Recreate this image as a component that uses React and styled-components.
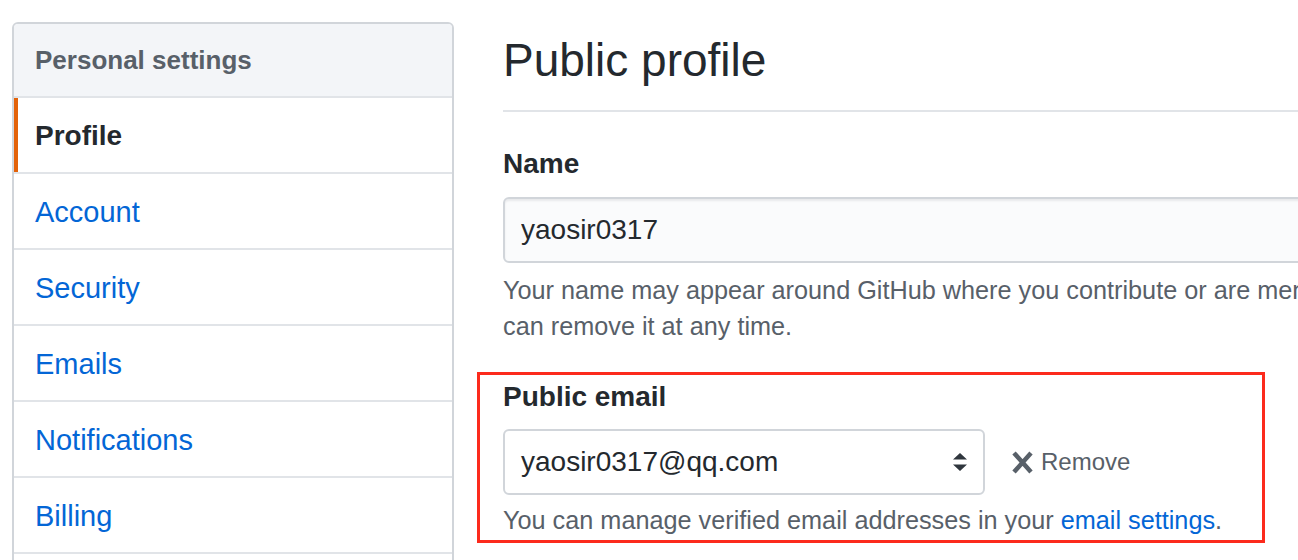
import React from 'react';
import styled, { createGlobalStyle } from 'styled-components';

const GlobalStyle = createGlobalStyle`
  html, body {
    margin: 0;
    padding: 0;
    background: #fff;
    overflow: hidden;
  }

  body {
    font-family: "Liberation Sans", Arial, sans-serif;
    color: #24292e;
  }
`;

const Page = styled.div`
  display: flex;
  align-items: flex-start;
  gap: 49px;
  width: max-content;
  padding: 22px 0 0 12px;
`;

const Sidebar = styled.nav`
  flex-shrink: 0;
  width: 442px;
  box-sizing: border-box;
  border: 2px solid #d1d5da;
  border-radius: 6px;
  overflow: hidden;
`;

const MenuHeading = styled.div`
  display: flex;
  align-items: center;
  height: 72px;
  padding: 0 21px;
  background: #f3f5f8;
  border-bottom: 2px solid #e1e4e8;
  font-size: 26px;
  font-weight: bold;
  color: #586069;
`;

const MenuItem = styled.a`
  display: flex;
  align-items: center;
  height: 76px;
  box-sizing: border-box;
  padding: 2px 0 0 21px;
  border-bottom: 2px solid #e1e4e8;
  font-size: ${({ $active }) => ($active ? 28 : 29)}px;
  text-decoration: none;
  color: ${({ $active }) => ($active ? '#24292e' : '#0366d6')};
  font-weight: ${({ $active }) => ($active ? 'bold' : 'normal')};
  box-shadow: ${({ $active }) => ($active ? 'inset 4px 0 0 #e36209' : 'none')};
`;

const Main = styled.main`
  flex-shrink: 0;
  width: 980px;
`;

const Subhead = styled.div`
  padding: 9px 0 21px;
  border-bottom: 2px solid #e1e4e8;
`;

const Title = styled.h2`
  margin: 0;
  font-size: 46px;
  line-height: 58px;
  font-weight: normal;
  color: #24292e;
`;

const FormGroup = styled.div`
  margin-top: 34px;
`;

const Label = styled.label`
  display: block;
  margin-bottom: ${({ $gap }) => $gap || 15}px;
  font-size: 28px;
  line-height: 36px;
  font-weight: bold;
  color: #24292e;
`;

const TextInput = styled.input`
  display: block;
  width: 880px;
  height: 66px;
  box-sizing: border-box;
  padding: 0 16px;
  border: 2px solid #d1d5da;
  border-radius: 6px;
  background: #fafbfc;
  box-shadow: inset 0 2px 2px rgba(27, 31, 35, 0.075);
  font-family: inherit;
  font-size: 28px;
  color: #24292e;
  outline: none;
`;

const Note = styled.p`
  margin: ${({ $top }) => $top}px 0 0;
  width: 940px;
  font-size: 25.25px;
  line-height: 36px;
  color: #586069;

  a {
    color: #0366d6;
    text-decoration: none;
  }
`;

const Highlight = styled.div`
  width: 788px;
  box-sizing: border-box;
  margin: 28px 0 0 -26px;
  padding: 4px 0 2px 23px;
  border: 3px solid #fc2a1c;
`;

const SelectRow = styled.div`
  display: flex;
  align-items: center;
`;

const SelectBox = styled.div`
  display: flex;
  align-items: center;
  justify-content: space-between;
  width: 482px;
  height: 66px;
  box-sizing: border-box;
  padding: 0 16px;
  border: 2px solid #d1d5da;
  border-radius: 6px;
  background: #fff;
  font-size: 28px;
  color: #24292e;
`;

const RemoveButton = styled.button`
  display: flex;
  align-items: center;
  gap: 8px;
  margin-left: 27px;
  padding: 0;
  border: none;
  background: none;
  font-family: inherit;
  font-size: 24px;
  color: #586069;
  cursor: pointer;
`;

const menu = [
  'Profile',
  'Account',
  'Security',
  'Emails',
  'Notifications',
  'Billing',
  'SSH and GPG keys',
  'Blocked users',
];

const SelectArrows = () => (
  <svg width="14" height="18" viewBox="0 0 14 18">
    <path d="M0 6.5 L7 0 L14 6.5 Z M0 11.5 L7 18 L14 11.5 Z" fill="#2f363d" />
  </svg>
);

const XIcon = () => (
  <svg width="21" height="23" viewBox="0 0 21 23">
    <path
      d="M2 2 L19 21 M19 2 L2 21"
      stroke="#586069"
      strokeWidth="4.5"
      fill="none"
    />
  </svg>
);

const App = () => (
  <>
    <GlobalStyle />
    <Page>
      <Sidebar>
        <MenuHeading>Personal settings</MenuHeading>
        {menu.map((item, i) => (
          <MenuItem key={item} href="#" $active={i === 0}>
            {item}
          </MenuItem>
        ))}
      </Sidebar>
      <Main>
        <Subhead>
          <Title>Public profile</Title>
        </Subhead>
        <FormGroup>
          <Label>Name</Label>
          <TextInput defaultValue="yaosir0317" />
          <Note $top={9}>
            Your name may appear around GitHub where you contribute or are
            mentioned. You can remove it at any time.
          </Note>
        </FormGroup>
        <Highlight>
          <Label $gap={14}>Public email</Label>
          <SelectRow>
            <SelectBox>
              <span>yaosir0317@qq.com</span>
              <SelectArrows />
            </SelectBox>
            <RemoveButton>
              <XIcon />
              Remove
            </RemoveButton>
          </SelectRow>
          <Note $top={7}>
            You can manage verified email addresses in your{' '}
            <a href="#">email settings</a>.
          </Note>
        </Highlight>
      </Main>
    </Page>
  </>
);

export default App;
